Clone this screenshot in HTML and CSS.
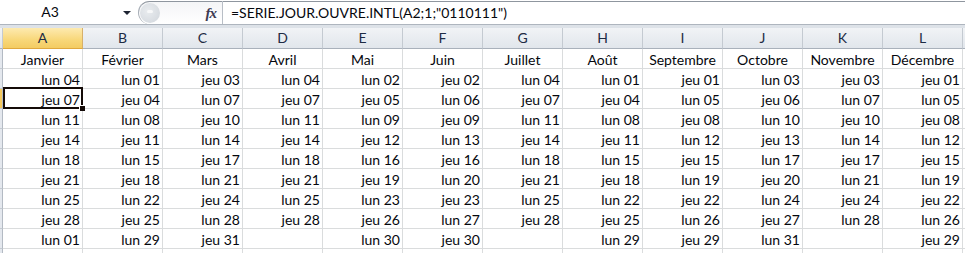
FILE: index.html
```html
<!DOCTYPE html>
<html lang="fr">
<head>
    <meta charset="UTF-8">
    <title>SERIE.JOUR.OUVRE.INTL</title>
    <link rel="stylesheet" href="styles.css">
</head>
<body>
    <div class="formula-bar">
        <div class="name-box">
            <span class="name">A3</span>
            <span class="arrow"></span>
        </div>
        <div class="fx-zone">
            <span class="grip"><span class="dot"></span></span>
            <span class="fx">fx</span>
        </div>
        <div class="formula">=SERIE.JOUR.OUVRE.INTL(A2;1;"0110111")</div>
    </div>
    <div class="band"></div>

    <div class="sheet">
        <div id="grid" class="grid"></div>
    </div>

    <script>
        const months = ['Janvier', 'Février', 'Mars', 'Avril', 'Mai', 'Juin', 'Juillet', 'Août', 'Septembre', 'Octobre', 'Novembre', 'Décembre'];
        const rows = [
            ['lun 04', 'lun 01', 'jeu 03', 'lun 04', 'lun 02', 'jeu 02', 'lun 04', 'lun 01', 'jeu 01', 'lun 03', 'jeu 03', 'jeu 01'],
            ['jeu 07', 'jeu 04', 'lun 07', 'jeu 07', 'jeu 05', 'lun 06', 'jeu 07', 'jeu 04', 'lun 05', 'jeu 06', 'lun 07', 'lun 05'],
            ['lun 11', 'lun 08', 'jeu 10', 'lun 11', 'lun 09', 'jeu 09', 'lun 11', 'lun 08', 'jeu 08', 'lun 10', 'jeu 10', 'jeu 08'],
            ['jeu 14', 'jeu 11', 'lun 14', 'jeu 14', 'jeu 12', 'lun 13', 'jeu 14', 'jeu 11', 'lun 12', 'jeu 13', 'lun 14', 'lun 12'],
            ['lun 18', 'lun 15', 'jeu 17', 'lun 18', 'lun 16', 'jeu 16', 'lun 18', 'lun 15', 'jeu 15', 'lun 17', 'jeu 17', 'jeu 15'],
            ['jeu 21', 'jeu 18', 'lun 21', 'jeu 21', 'jeu 19', 'lun 20', 'jeu 21', 'jeu 18', 'lun 19', 'jeu 20', 'lun 21', 'lun 19'],
            ['lun 25', 'lun 22', 'jeu 24', 'lun 25', 'lun 23', 'jeu 23', 'lun 25', 'lun 22', 'jeu 22', 'lun 24', 'jeu 24', 'jeu 22'],
            ['jeu 28', 'jeu 25', 'lun 28', 'jeu 28', 'jeu 26', 'lun 27', 'jeu 28', 'jeu 25', 'lun 26', 'jeu 27', 'lun 28', 'lun 26'],
            ['lun 01', 'lun 29', 'jeu 31', '', 'lun 30', 'jeu 30', '', 'lun 29', 'jeu 29', 'lun 31', '', 'jeu 29'],
            ['', '', '', '', '', '', '', '', '', '', '', '']
        ];
        const letters = 'ABCDEFGHIJKL'.split('');

        const grid = document.getElementById('grid');

        function cell(cls, text) {
            const div = document.createElement('div');
            div.className = cls;
            div.textContent = text || '';
            grid.appendChild(div);
            return div;
        }

        // en-têtes de colonnes
        cell('corner');
        letters.forEach(function(l) {
            cell(l === 'A' ? 'col-head selected' : 'col-head', l);
        });
        cell('col-head');

        // ligne des mois
        cell('row-head');
        months.forEach(function(m) { cell('cell center', m); });
        cell('cell');

        // lignes de dates
        rows.forEach(function(r, i) {
            cell(i === 1 ? 'row-head selected' : 'row-head');
            r.forEach(function(v, j) {
                cell(i === 1 && j === 0 ? 'cell active' : 'cell', v);
            });
            cell('cell');
        });
    </script>
</body>
</html>
```

FILE: styles.css
```css
body {
    margin: 0;
    width: 965px;
    height: 253px;
    overflow: hidden;
    background-color: #ffffff;
    font-family: Lato, "Liberation Sans", sans-serif;
    font-size: 14px;
    color: #05070d;
}
.formula-bar {
    display: flex;
    height: 25px;
    box-sizing: border-box;
    border-bottom: 1px solid #aeb5be;
    background-color: #ffffff;
}
.name-box {
    width: 138px;
    display: flex;
    align-items: center;
}
.name {
    width: 100px;
    text-align: center;
    line-height: 24px;
}
.arrow {
    margin-left: 23px;
    width: 0;
    height: 0;
    border-left: 4px solid transparent;
    border-right: 4px solid transparent;
    border-top: 4px solid #1e2433;
    margin-top: 2px;
}
.fx-zone {
    width: 85px;
    display: flex;
    align-items: center;
    justify-content: space-between;
    box-sizing: border-box;
    margin-top: 1px;
    border-top: 1px solid #8f969f;
    border-left: 1px solid #a6adb6;
    border-right: 1px solid #b8bec6;
    border-radius: 12px 0 0 12px;
    background: linear-gradient(#f4f5f7, #ffffff);
    padding-right: 6px;
}
.grip {
    width: 20px;
    height: 20px;
    border-radius: 50%;
    margin-left: 1px;
    background: radial-gradient(circle at 40% 40%, #e9ecef, #d0d5db);
    display: flex;
    align-items: center;
    justify-content: center;
}
.dot {
    width: 6px;
    height: 3px;
    border-radius: 2px;
    background-color: #f7f8f9;
    margin-top: -4px;
}
.fx {
    font-family: "Liberation Serif", serif;
    font-style: italic;
    font-weight: bold;
    font-size: 15px;
    color: #3d3a52;
    letter-spacing: -1px;
}
.formula {
    flex: 1;
    margin-top: 1px;
    border-top: 1px solid #8f969f;
    padding-left: 8px;
    line-height: 21px;
}
.band {
    height: 3px;
    background-color: #dde2e8;
}
.sheet {
    overflow: hidden;
    width: 965px;
    height: 225px;
}
.grid {
    display: grid;
    grid-template-columns: 3px repeat(13, 80px);
    grid-template-rows: 21px;
    grid-auto-rows: 20px;
    width: 1043px;
}
.corner, .col-head {
    background: linear-gradient(#f1f3f6, #e1e6ec);
    border-right: 1px solid #c4cad1;
    border-bottom: 1px solid #a9b1bb;
    box-sizing: border-box;
}
.col-head {
    text-align: center;
    line-height: 20px;
    color: #1d2b44;
}
.col-head.selected {
    background: linear-gradient(#fdeab0, #f8d779 60%, #f4cc62);
    border-bottom-color: #e0a83d;
    border-right-color: #d7b06a;
}
.row-head {
    background-color: #e4e8ee;
    border-right: 1px solid #b3bac3;
    border-bottom: 1px solid #c4cad1;
    box-sizing: border-box;
}
.row-head.selected {
    background-color: #f5c95e;
}
.cell {
    border-right: 1px solid #dadcdd;
    border-bottom: 1px solid #dadcdd;
    box-sizing: border-box;
    display: flex;
    align-items: flex-end;
    justify-content: flex-end;
    padding: 0 2px;
    line-height: 17px;
    white-space: nowrap;
}
.cell.center {
    justify-content: center;
}
.cell.active {
    position: relative;
}
.cell.active::after {
    content: "";
    position: absolute;
    top: -2px;
    left: 0;
    right: -1px;
    bottom: -1px;
    border: 2px solid #140b08;
}
.cell.active::before {
    content: "";
    position: absolute;
    right: -3px;
    bottom: -3px;
    width: 5px;
    height: 5px;
    background-color: #140b08;
    border-left: 1px solid #ffffff;
    border-top: 1px solid #ffffff;
    z-index: 1;
}
```
